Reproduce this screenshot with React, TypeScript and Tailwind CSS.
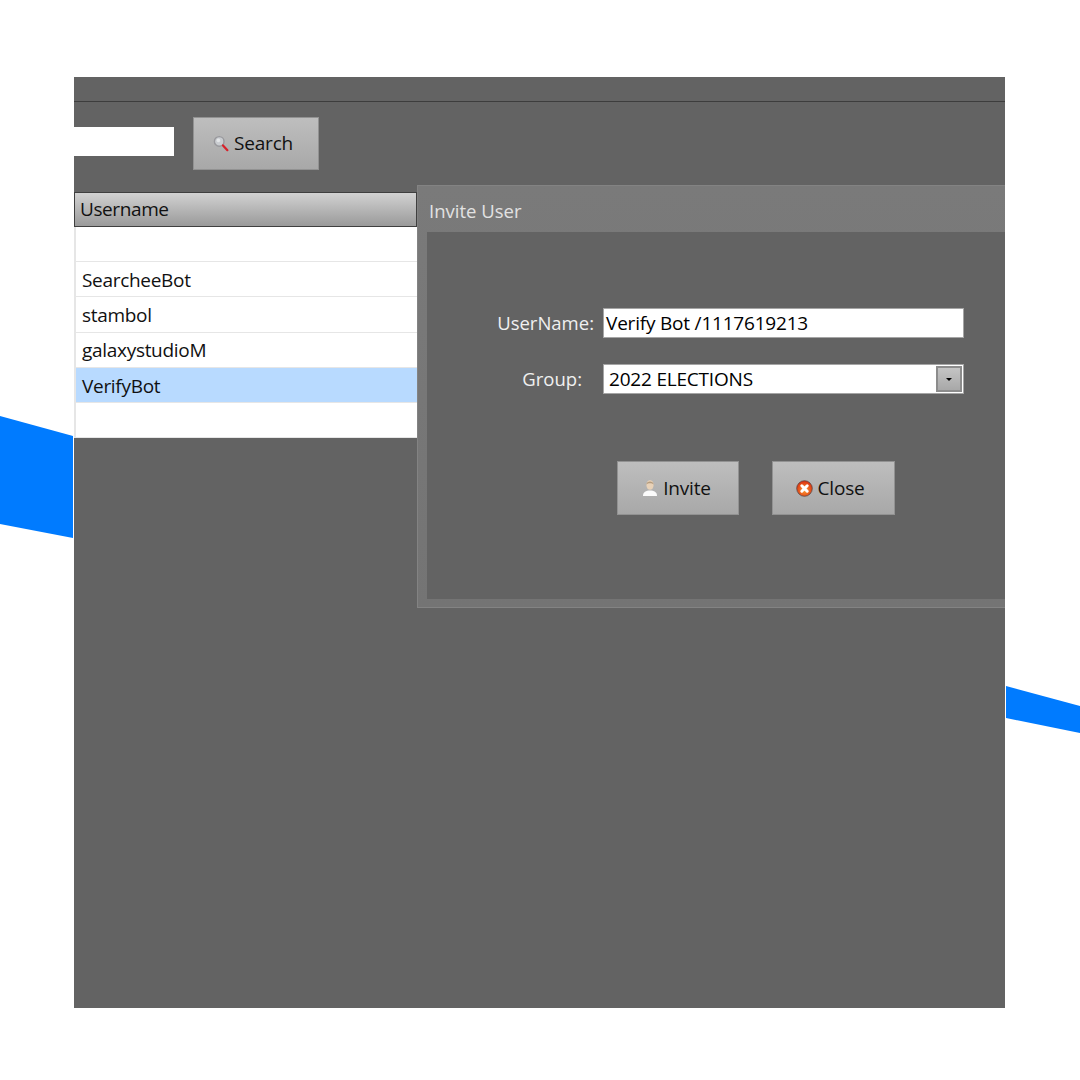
const font = "[font-family:'Open_Sans','Noto_Sans',sans-serif]";

const rows = ["", "SearcheeBot", "stambol", "galaxystudioM", "VerifyBot", ""];

function SearchIcon() {
  return (
    <svg width="16" height="17" viewBox="0 0 16 17" className="shrink-0">
      <circle cx="6.2" cy="6.4" r="4.8" fill="#c9ccd0" stroke="#98989c" strokeWidth="1.4" />
      <circle cx="5.4" cy="5.4" r="1.8" fill="#e4e6e8" />
      <path d="M10 10.4 L14.4 15.2" stroke="#d8202a" strokeWidth="2.2" strokeLinecap="round" />
    </svg>
  );
}

function UserIcon() {
  return (
    <svg width="16" height="18" viewBox="0 0 16 18" className="shrink-0">
      <path d="M1 17 C1 13 4 11.6 8 11.6 C12 11.6 15 13 15 17 Z" fill="#fbfbfb" />
      <ellipse cx="8" cy="6" rx="3.6" ry="4.8" fill="#e9d2b8" />
      <path d="M4.4 5.4 C4.4 1.4 11.6 1.4 11.6 5.4 C10 3.8 6 3.8 4.4 5.4 Z" fill="#b59c7e" />
    </svg>
  );
}

function CloseIcon() {
  return (
    <svg width="17" height="17" viewBox="0 0 17 17" className="shrink-0">
      <defs>
        <radialGradient id="closeFill" cx="50%" cy="60%" r="60%">
          <stop offset="0%" stopColor="#ffa030" />
          <stop offset="100%" stopColor="#d8280f" />
        </radialGradient>
      </defs>
      <circle cx="8.5" cy="8.5" r="7.8" fill="url(#closeFill)" stroke="#5c4a44" strokeWidth="0.8" />
      <path d="M5.8 5.8 L11.2 11.2 M11.2 5.8 L5.8 11.2" stroke="#ffffff" strokeWidth="3" strokeLinecap="round" />
    </svg>
  );
}

function GrayButton({ icon, label, className }: { icon: React.ReactNode; label: string; className: string }) {
  return (
    <button
      className={`flex items-center justify-center gap-[5px] border border-[#929292] bg-gradient-to-b from-[#bebebe] to-[#a8a8a8] text-[19px] tracking-[-0.2px] text-[#111] ${className}`}
    >
      {icon}
      {label}
    </button>
  );
}

function App() {
  return (
    <div className={`relative h-[1080px] w-[1080px] overflow-hidden bg-white pl-[74px] pt-[77px] ${font}`}>
      {/* blue streaks behind the window */}
      <svg width="1080" height="1080" viewBox="0 0 1080 1080" className="absolute left-0 top-0">
        <polygon points="0,416 73,436 73,538 0,524" fill="#007bff" />
        <polygon points="1006,686 1080,706 1080,733 1006,718" fill="#007bff" />
      </svg>

      <div className="relative flex h-[931px] w-[931px] flex-col overflow-hidden bg-[#636363]">
        <div className="h-[25px] shrink-0 border-b border-[#3d3d3d]" />

        <div className="flex h-[90px] shrink-0 items-start gap-[19px]">
          <div className="mt-[25px] h-[29px] w-[100px] bg-white" />
          <GrayButton icon={<SearchIcon />} label="Search" className="mt-[15px] h-[53px] w-[126px] pr-[6px]" />
        </div>

        <div className="w-[343px] shrink-0">
          <div className="flex h-[35px] items-center border border-[#3f3f3f] bg-gradient-to-b from-[#d2d2d2] to-[#9a9a9a] pl-[5px] text-[19px] tracking-[-0.4px] text-[#111]">
            Username
          </div>
          {rows.map((name, i) => (
            <div
              key={i}
              className={`flex h-[35.2px] items-center border-b border-l-2 border-[#e6e6e6] pl-[6px] pt-[2px] text-[19px] tracking-[-0.3px] text-[#111] ${
                name === "VerifyBot" ? "bg-[#b8daff]" : "bg-white"
              }`}
            >
              {name}
            </div>
          ))}
        </div>

        {/* invite dialog, floats over the list */}
        <div className="absolute left-[343px] top-[108px] flex h-[423px] w-[600px] flex-col border border-[#838383] bg-gradient-to-b from-[#7a7a7a] to-[#747474]">
          <div className="flex h-[46px] shrink-0 items-center pl-[11px] pt-[3px] text-[18.5px] text-[#e2e2e2]">
            Invite User
          </div>
          <div className="mb-[8px] ml-[9px] flex-1 bg-[#636363] pt-[76px]">
            <div className="flex h-[30px] items-center">
              <span className="w-[167px] text-right text-[18.5px] text-[#f0f0f0]">UserName:</span>
              <div className="ml-[9px] flex h-[30px] w-[361px] items-center border border-[#a5a5a5] bg-white pl-[2px] text-[19px] tracking-[-0.2px] text-black">
                Verify Bot /1117619213
              </div>
            </div>
            <div className="mt-[26px] flex h-[30px] items-center">
              <span className="w-[155px] text-right text-[18.5px] text-[#f0f0f0]">Group:</span>
              <div className="ml-[21px] flex h-[30px] w-[361px] items-center justify-between border border-[#a5a5a5] bg-white pl-[5px] pr-[1px] text-[19px] tracking-[-0.2px] text-black">
                2022 ELECTIONS
                <span className="flex h-[26px] w-[26px] items-center justify-center border-2 border-[#8c8c8c] bg-gradient-to-b from-[#c4c4c4] to-[#a8a8a8]">
                  <span className="h-0 w-0 border-x-[3px] border-t-[3px] border-x-transparent border-t-black" />
                </span>
              </div>
            </div>
            <div className="ml-[190px] mt-[67px] flex gap-[33px]">
              <GrayButton icon={<UserIcon />} label="Invite" className="h-[54px] w-[122px] pr-[3px]" />
              <GrayButton icon={<CloseIcon />} label="Close" className="h-[54px] w-[123px] pr-[7px]" />
            </div>
          </div>
        </div>
      </div>
    </div>
  );
}

export default App;
